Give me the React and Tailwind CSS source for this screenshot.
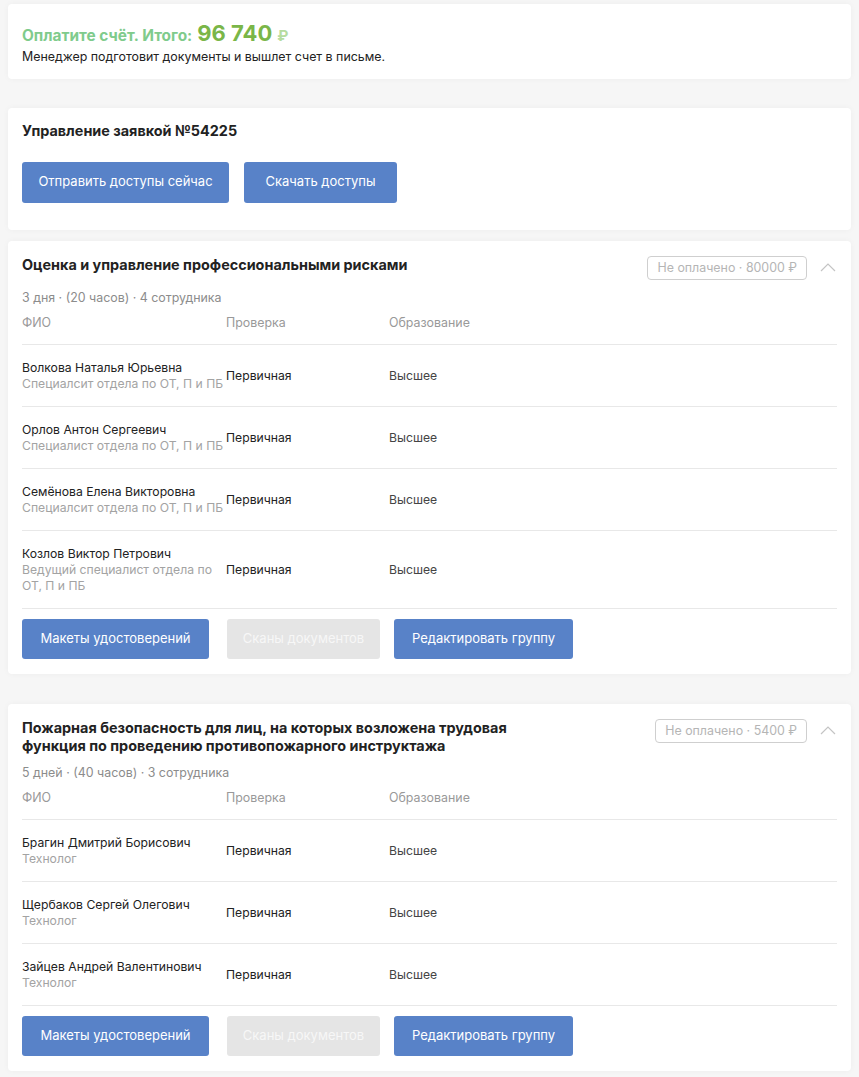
import { useState } from "react";

const groups = [
  {
    id: 1,
    title: "Оценка и управление профессиональными рисками",
    meta: "3 дня · (20 часов) · 4 сотрудника",
    price: "80000",
    people: [
      { name: "Волкова Наталья Юрьевна", post: "Специалсит отдела по ОТ, П и ПБ" },
      { name: "Орлов Антон Сергеевич", post: "Специалист отдела по ОТ, П и ПБ" },
      { name: "Семёнова Елена Викторовна", post: "Специалсит отдела по ОТ, П и ПБ" },
      { name: "Козлов Виктор Петрович", post: "Ведущий специалист отдела по ОТ, П и ПБ" },
    ],
  },
  {
    id: 2,
    title: "Пожарная безопасность для лиц, на которых возложена трудовая функция по проведению противопожарного инструктажа",
    meta: "5 дней · (40 часов) · 3 сотрудника",
    price: "5400",
    people: [
      { name: "Брагин Дмитрий Борисович", post: "Технолог" },
      { name: "Щербаков Сергей Олегович", post: "Технолог" },
      { name: "Зайцев Андрей Валентинович", post: "Технолог" },
    ],
  },
];

const Card = ({ className = "", children }) => (
  <div className={`mx-2 rounded bg-white shadow-[0_0_6px_rgba(0,0,0,0.04)] ${className}`}>{children}</div>
);

const Chevron = () => (
  <svg width="16" height="10" viewBox="0 0 16 10" className="mt-[6px]">
    <polyline points="1,9 8,2 15,9" fill="none" stroke="#c4c4c4" strokeWidth="1.2" />
  </svg>
);

const Group = ({ group }) => {
  const [open, setOpen] = useState(true);
  return (
    <Card className="px-[14px] pb-[15px] pt-[15px]">
      <div className="flex items-start justify-between">
        <h3 className="max-w-[520px] text-[14.4px] font-bold leading-[18px] text-[#222]">{group.title}</h3>
        <div className="flex items-start gap-[13px]">
          <span className="rounded border border-[#cfcfcf] px-[9px] py-[3px] text-[12.4px] leading-4 text-[#b5b5b5]">
            Не оплачено · {group.price} ₽
          </span>
          <button onClick={() => setOpen(!open)} className="pr-[1px]">
            <Chevron />
          </button>
        </div>
      </div>
      <p className="mt-[10px] text-[12.4px] leading-4 text-[#8c8c8c]">{group.meta}</p>
      {open && (
        <>
          <div className="mt-[9px] grid grid-cols-[204px_163px_1fr] border-b border-[#e8e8e8] pb-[13px] text-[12.4px] leading-4 text-[#999]">
            <span>ФИО</span>
            <span>Проверка</span>
            <span>Образование</span>
          </div>
          {group.people.map((p) => (
            <div key={p.name} className="grid grid-cols-[204px_163px_1fr] items-center border-b border-[#e8e8e8] pb-[14px] pt-[15px] text-[12.2px] leading-4">
              <div>
                <div className="text-[#222]">{p.name}</div>
                <div className="text-[#a3a3a3]">{p.post}</div>
              </div>
              <span className="text-[#222]">Первичная</span>
              <span className="text-[#444]">Высшее</span>
            </div>
          ))}
        </>
      )}
      <div className="mt-[10px] flex text-[13px]">
        <button className="h-[40px] w-[187px] rounded-[3px] bg-[#5882c8] text-white">Макеты удостоверений</button>
        <button className="ml-[18px] h-[40px] w-[153px] rounded-[3px] bg-[#e5e5e5] text-[#f7f7f7]">Сканы документов</button>
        <button className="ml-[14px] h-[40px] w-[179px] rounded-[3px] bg-[#5882c8] text-white">Редактировать группу</button>
      </div>
    </Card>
  );
};

export default function App() {
  return (
    <div className="min-h-screen bg-[#f6f6f6] pb-2 pt-1 font-['Inter',sans-serif]">
      <Card className="px-[14px] pb-[14px] pt-[17px]">
        <div className="flex items-baseline gap-[5px]">
          <span className="text-[15.4px] font-bold text-[#7fcb8c]">Оплатите счёт. Итого:</span>
          <span className="text-[22px] font-bold leading-6 text-[#7ab648]">96 740</span>
          <span className="text-[15px] font-bold text-[#b6dca0]">₽</span>
        </div>
        <p className="mt-[1px] text-[12.4px] leading-4 text-[#222]">Менеджер подготовит документы и вышлет счет в письме.</p>
      </Card>
      <Card className="mt-[29px] px-[14px] pb-[27px] pt-[14px]">
        <h2 className="text-[14.4px] font-bold leading-[18px] text-[#222]">Управление заявкой №54225</h2>
        <div className="mt-[22px] flex gap-[15px] text-[13px]">
          <button className="h-[41px] w-[207px] rounded-[3px] bg-[#5882c8] text-white">Отправить доступы сейчас</button>
          <button className="h-[41px] w-[153px] rounded-[3px] bg-[#5882c8] text-white">Скачать доступы</button>
        </div>
      </Card>
      <div className="mt-[11px]">
        <Group group={groups[0]} />
      </div>
      <div className="mt-[30px]">
        <Group group={groups[1]} />
      </div>
    </div>
  );
}
